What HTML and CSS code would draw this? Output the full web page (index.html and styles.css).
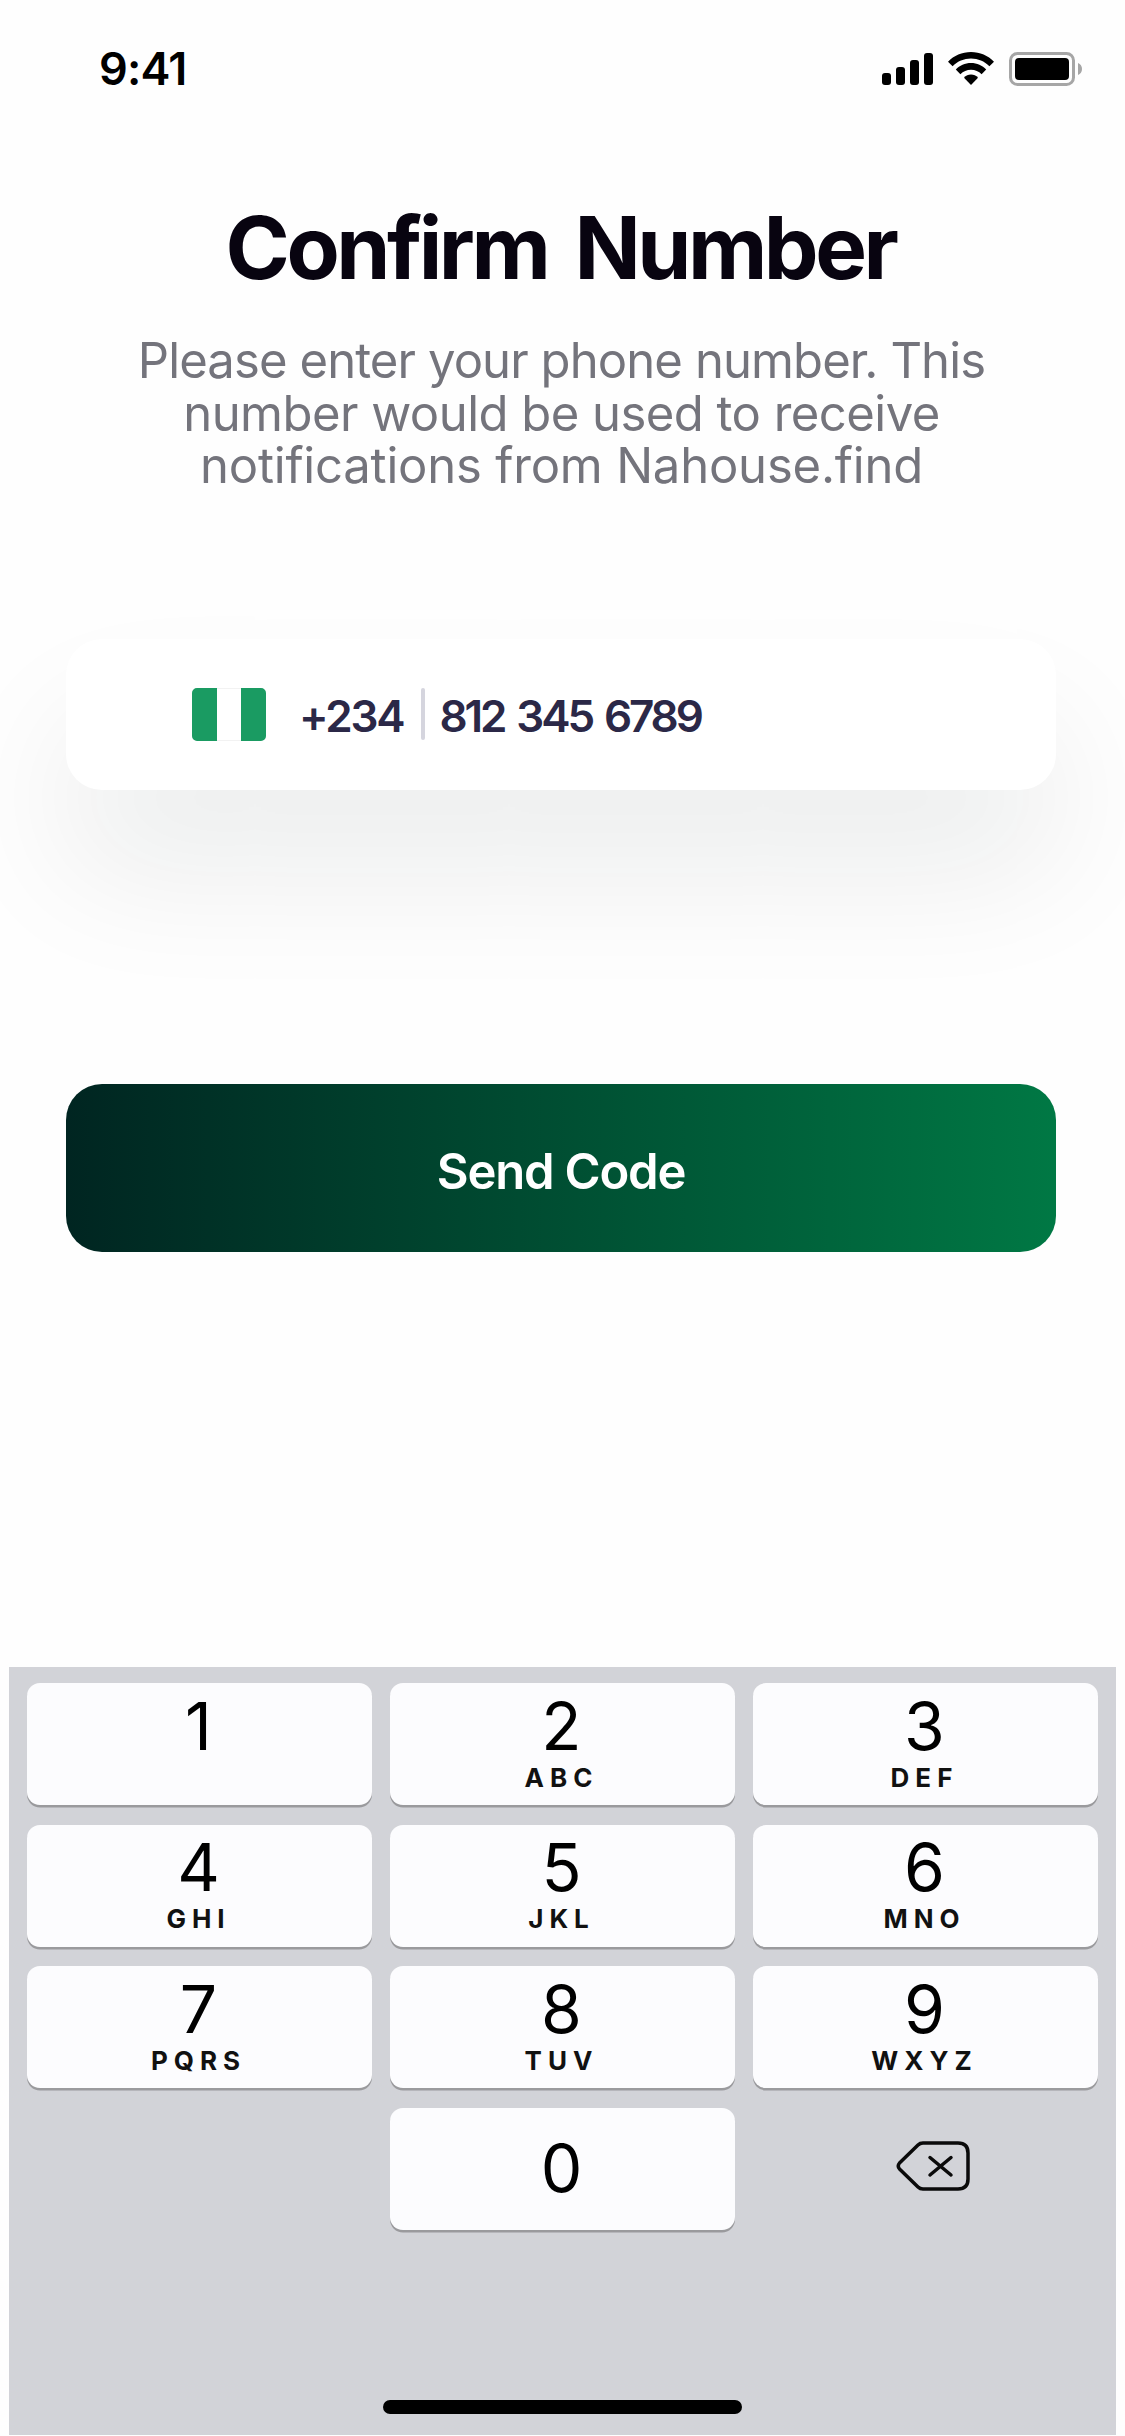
FILE: index.html
```html
<!DOCTYPE html>
<html lang="en">
<head>
<meta charset="utf-8">
<title>Confirm Number</title>
<link rel="stylesheet" href="styles.css">
</head>
<body>
<main class="screen">
  <header class="status-bar">
    <span class="time">9:41</span>
    <div class="status-icons">
      <svg class="signal" viewBox="0 0 51 34" width="51" height="34"><rect x="0" y="21" width="9" height="12" rx="3"/><rect x="14" y="15" width="9" height="18" rx="3"/><rect x="28" y="8" width="9" height="25" rx="3"/><rect x="42" y="1" width="9" height="32" rx="3"/></svg>
      <svg class="wifi" viewBox="0 0 46 34" width="46" height="34"><path d="M23 0C14 0 6 3.500 0 9.700L4.600 14.200C9.500 9.300 16 6.500 23 6.500S36.500 9.300 41.400 14.200L46 9.700C40 3.500 32 0 23 0Z"/><path d="M23 11C17 11 11.600 13.500 7.800 17.500L12.400 22.200C15.200 19.300 18.900 17.700 23 17.700S30.800 19.300 33.600 22.200L38.200 17.500C34.400 13.500 29 11 23 11Z"/><path d="M23 22.600C20.300 22.600 17.800 23.700 16 25.800L23 33L30 25.800C28.200 23.700 25.700 22.600 23 22.600Z"/></svg>
      <svg class="battery" viewBox="0 0 74 34" width="74" height="34"><rect x="1.500" y="1.500" width="63" height="31" rx="7" fill="none" stroke="#a6a6a6" stroke-width="3"/><rect x="6" y="6" width="54" height="22" rx="4"/><path d="M69 11C71.500 12 73 14.300 73 17S71.500 22 69 23Z" fill="#a6a6a6"/></svg>
    </div>
  </header>

  <h1 class="title">Confirm Number</h1>
  <p class="subtitle">
    <span class="line line-1">Please enter your phone number. This</span>
    <span class="line line-2">number would be used to receive</span>
    <span class="line line-3">notifications from Nahouse.find</span>
  </p>

  <div class="phone-field">
    <svg class="flag" viewBox="0 0 74 53" width="74" height="53"><rect x=".5" y=".5" width="73" height="52" rx="5" fill="#fff" stroke="#f2f2f2"/><path d="M25 0H5a5 5 0 0 0-5 5V48a5 5 0 0 0 5 5H25ZM49 0H69a5 5 0 0 1 5 5V48a5 5 0 0 1-5 5H49Z" fill="#1a9b62"/></svg>
    <span class="dial-code">+234</span>
    <span class="divider"></span>
    <span class="number">812 345 6789</span>
  </div>

  <button class="send">Send Code</button>

  <section class="keyboard">
    <div class="keys">
      <div class="key"><span class="digit">1</span></div>
      <div class="key"><span class="digit">2</span><span class="letters">ABC</span></div>
      <div class="key"><span class="digit">3</span><span class="letters">DEF</span></div>
      <div class="key"><span class="digit">4</span><span class="letters">GHI</span></div>
      <div class="key"><span class="digit">5</span><span class="letters">JKL</span></div>
      <div class="key"><span class="digit">6</span><span class="letters">MNO</span></div>
      <div class="key"><span class="digit">7</span><span class="letters">PQRS</span></div>
      <div class="key"><span class="digit">8</span><span class="letters">TUV</span></div>
      <div class="key"><span class="digit">9</span><span class="letters">WXYZ</span></div>
      <div class="key key-zero"><span class="digit">0</span></div>
      <div class="key-delete">
        <svg viewBox="0 0 74 50" width="74" height="50" fill="none" stroke="#0a0a0a" stroke-width="3.500" stroke-linecap="round" stroke-linejoin="round"><path d="M27 2H62Q72 2 72 12V38Q72 48 62 48H27Q24 48 22 46L3.500 28Q1 25 3.500 22L22 4Q24 2 27 2Z"/><path d="M34 16.500L55 34M55 16.500L34 34"/></svg>
      </div>
    </div>
    <div class="home-bar"></div>
  </section>
</main>
</body>
</html>
```
FILE: styles.css
```css
* { box-sizing: border-box; }
body {
  margin: 0;
  background: #fefefe;
  font-family: Inter, "Liberation Sans", sans-serif;
}
.screen {
  width: 1125px;
  height: 2436px;
  display: flex;
  flex-direction: column;
  align-items: center;
  overflow: hidden;
}
.status-bar {
  width: 100%;
  height: 136px;
  padding: 2px 42px 0 99px;
  display: flex;
  justify-content: space-between;
  align-items: center;
  flex: none;
}
.time { font-size: 45px; font-weight: 600; line-height: 54px; letter-spacing: -.8px; }
.status-icons { display: flex; align-items: center; gap: 15px; }
.title {
  margin: 60px 4px 0 0;
  font-size: 87px;
  font-weight: 700;
  line-height: 104px;
  letter-spacing: -3.500px;
  word-spacing: 10px;
  color: #080410;
  white-space: nowrap;
}
.subtitle {
  margin: 35px 2px 0 0;
  font-size: 49px;
  line-height: 52.500px;
  text-align: center;
  color: #74747c;
}
.line { display: block; white-space: nowrap; }
.line-1 { letter-spacing: -.9px; }
.line-2 { letter-spacing: -.53px; }
.line-3 { letter-spacing: -.2px; }
.phone-field {
  width: 990px;
  height: 151px;
  margin: 146px 3px 0 0;
  padding-left: 126px;
  display: flex;
  align-items: center;
  flex: none;
  border-radius: 36px;
  background: #fff;
  box-shadow: 0 83px 135px rgba(0, 30, 30, .073);
  font-size: 44px;
  font-weight: 600;
  color: #2b2847;
}
.flag { flex: none; }
.dial-code { margin-left: 33px; padding-top: 3px; letter-spacing: -2.200px; }
.divider { width: 4px; height: 52px; margin: 0 14px 0 18px; border-radius: 2px; background: #d5d5de; }
.number { padding-top: 3px; letter-spacing: -3.100px; word-spacing: 4px; white-space: nowrap; }
.send {
  width: 990px;
  height: 168px;
  margin: 294.500px 3px 0 0;
  padding: 7px 0 0;
  flex: none;
  border: 0;
  border-radius: 36px;
  background: linear-gradient(90deg, #002521, #007844);
  color: #fff;
  font: 600 49px Inter, "Liberation Sans", sans-serif;
  letter-spacing: -1.200px;
}
.keyboard {
  width: 1107px;
  height: 768px;
  margin-top: 415px;
  padding: 16px 18px 0;
  flex: none;
  background: #d2d3d8;
  display: flex;
  flex-direction: column;
  align-items: center;
}
.keys {
  width: 100%;
  display: grid;
  grid-template-columns: repeat(3, 345px);
  grid-auto-rows: 122px;
  gap: 19.500px 18px;
}
.key {
  display: flex;
  flex-direction: column;
  align-items: center;
  padding: 9.500px 2px 0 0;
  border-radius: 13px;
  background: #fcfcfe;
  box-shadow: 0 2.500px 0 #9a9a9d;
}
.digit { font-size: 66px; line-height: 66px; color: #000; }
.letters { margin-top: 3px; font-size: 26px; font-weight: 700; line-height: 32px; letter-spacing: 6px; color: #111; }
.key-zero { grid-column: 2; padding-top: 27px; }
.key-delete { display: flex; align-items: center; justify-content: center; padding: 0 0 5px 14px; }
.home-bar { width: 359px; height: 14px; margin: 170px 1px 0 0; border-radius: 7px; background: #000; }
```
